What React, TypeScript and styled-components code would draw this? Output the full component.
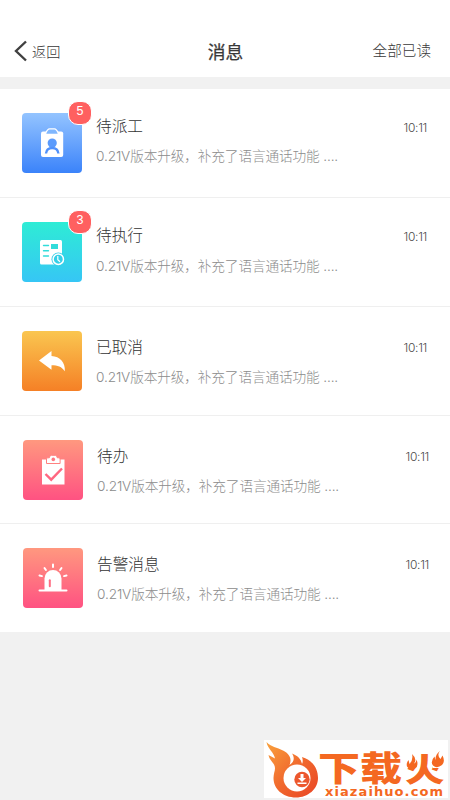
import React from "react";
import styled, { createGlobalStyle } from "styled-components";

const GlobalStyle = createGlobalStyle`
  * { box-sizing: border-box; }
  body {
    margin: 0;
    background: #f1f1f1;
    font-family: Inter, "Noto Sans CJK SC", sans-serif;
  }
`;

const Page = styled.main`
  position: relative;
  width: 450px;
  height: 800px;
  overflow: hidden;
  background: #f1f1f1;
`;

const Header = styled.header`
  display: grid;
  grid-template-columns: 1fr auto 1fr;
  align-items: center;
  height: 77px;
  padding: 25px 19px 0 14px;
  background: #fff;
  color: #383838;
`;

const BackButton = styled.button`
  display: flex;
  align-items: center;
  gap: 4px;
  padding: 0;
  border: 0;
  background: none;
  color: inherit;
  font: 300 14.2px/22px "Noto Sans CJK SC", sans-serif;
`;

const Title = styled.h1`
  margin: 0;
  padding-left: 6px;
  font: 400 17.8px/26px "Noto Sans CJK SC", sans-serif;
  -webkit-text-stroke: 0.25px #383838;
`;

const ReadAll = styled.button`
  justify-self: end;
  padding: 0 0 2px;
  border: 0;
  background: none;
  color: inherit;
  font: 300 14.6px/22px "Noto Sans CJK SC", sans-serif;
`;

const List = styled.ul`
  margin: 12px 0 0;
  padding: 0;
  list-style: none;
  background: #fff;
`;

const Row = styled.li<{ $height: number; $indent: number; $last: boolean }>`
  display: flex;
  align-items: flex-start;
  height: ${(p) => p.$height}px;
  padding: 24px ${(p) => 23 - p.$indent * 2}px 0 ${(p) => 22 + p.$indent}px;
  border-bottom: ${(p) => (p.$last ? "0" : "1px solid #efefef")};
`;

const Tile = styled.div<{ $from: string; $to: string }>`
  position: relative;
  flex: none;
  width: 60px;
  height: 60px;
  border-radius: 4px;
  background: linear-gradient(${(p) => p.$from}, ${(p) => p.$to});

  > svg { display: block; }
`;

const Badge = styled.span`
  position: absolute;
  top: -12px;
  right: -10px;
  width: 24px;
  height: 24px;
  border: 1px solid #fff;
  border-radius: 10px;
  background: #ff6060;
  color: #fff;
  font: 300 12.5px/19px "Liberation Sans", sans-serif;
  text-align: center;
`;

const Message = styled.div<{ $shift: number }>`
  flex: 1;
  margin-left: 14px;
  padding-top: ${(p) => p.$shift}px;
`;

const Name = styled.h2`
  margin: 0;
  color: #333;
  font: 300 15.7px/24px "Noto Sans CJK SC", sans-serif;
`;

const Summary = styled.p<{ $gap: number }>`
  margin: ${(p) => p.$gap}px 0 0;
  color: #8c8c8c;
  font-size: 13.7px;
  font-weight: 300;
  line-height: 20px;
  letter-spacing: -0.16px;
  white-space: nowrap;
`;

const Time = styled.time<{ $top: number }>`
  margin-top: ${(p) => p.$top}px;
  color: #4c4c4c;
  font-size: 12px;
  font-weight: 300;
  line-height: 20px;
  letter-spacing: -0.3px;
`;

const Watermark = styled.aside`
  position: absolute;
  left: 264px;
  top: 740px;
  width: 184px;
  height: 58px;
  background: #fff;

  svg { display: block; }
`;

const AssignIcon = () => (
  <svg width="60" height="60" viewBox="0 0 60 60">
    <rect x="19" y="18.5" width="22.2" height="25.5" rx="2" fill="#fff" />
    <path fill="#80b7fe" stroke="#fff" strokeWidth="1.4" strokeLinejoin="round" d="M23.5 20.5q2.2-4.6 4-4.6h5q1.8 0 4 4.6-.3 1-2 1h-9q-1.7 0-2-1z" />
    <circle cx="30.2" cy="30" r="4.6" fill="#5b9bfc" />
    <path fill="none" stroke="#5091fb" strokeWidth="2.4" d="M24 40.5q.5-5.500 6.200-5.500t6.200 5.500" />
  </svg>
);

const ExecuteIcon = () => (
  <svg width="60" height="60" viewBox="0 0 60 60">
    <rect x="18" y="18" width="22" height="24.5" rx="1.5" fill="#fff" />
    <path stroke="#31dcda" strokeWidth="1.4" strokeLinecap="round" d="M21.5 23.5h5M21.5 28.8h5M21.5 34h5" />
    <path fill="#31dcda" d="M29 22h7v5h-7z" />
    <circle cx="36.3" cy="37.2" r="6.8" fill="#34d0e8" />
    <circle cx="36.3" cy="37.2" r="5.2" fill="none" stroke="#fff" strokeWidth="1.5" />
    <path fill="none" stroke="#fff" strokeWidth="1.2" d="M35.8 34v3.700l2.200 2" />
  </svg>
);

const CancelIcon = () => (
  <svg width="60" height="60" viewBox="0 0 60 60">
    <path fill="#fff" d="M17 29.5 29.5 20v5C38 25.5 43.5 31.5 42.8 40.2c-3-4.500-7-6-13.300-6v4.600z" />
  </svg>
);

const TodoIcon = () => (
  <svg width="60" height="60" viewBox="0 0 60 60">
    <path fill="#fff" d="M19 19.5h22.5v25H19z" />
    <path fill="#fff" stroke="#ff8180" strokeWidth="1" d="M23.5 23.5V19q0-1.200 1.200-1.200h1.600q.3-2.500 2-2.500h4q1.700 0 2 2.500h1.600q1.200 0 1.200 1.200v4.500z" />
    <circle cx="30.3" cy="19.4" r="1.8" fill="#ff7781" />
    <path fill="none" stroke="#ff6781" strokeWidth="2.4" d="m22.5 34 5.700 5.700L39 28.500" />
  </svg>
);

const AlarmIcon = () => (
  <svg width="60" height="60" viewBox="0 0 60 60">
    <path fill="#fff" d="M21.5 42V30.5a8.500 8.500 0 0 1 17 0V42z" />
    <path fill="none" stroke="#fff" strokeWidth="2" strokeLinecap="round" d="M16.5 42.5h27M30 16.5v2.500M21.5 20l1.400 2M38.5 20l-1.400 2M16.5 27.5l2.500.6M43.5 27.5l-2.500.6" />
    <path stroke="#ff6c82" strokeWidth="2" strokeLinecap="round" d="M26.8 32.2v6" />
  </svg>
);

const items = [
  { name: "待派工", count: 5, icon: <AssignIcon />, from: "#94c4ff", to: "#3b83fa", height: 109, indent: 0, shift: 1, gap: 8, timeTop: 5 },
  { name: "待执行", count: 3, icon: <ExecuteIcon />, from: "#2eecd5", to: "#36c6f5", height: 109, indent: 0, shift: 1, gap: 9, timeTop: 5 },
  { name: "已取消", icon: <CancelIcon />, from: "#fac650", to: "#f58026", height: 109, indent: 0, shift: 4, gap: 8, timeTop: 7 },
  { name: "待办", icon: <TodoIcon />, from: "#ff987f", to: "#ff5282", height: 108, indent: 1, shift: 4, gap: 8, timeTop: 7 },
  { name: "告警消息", icon: <AlarmIcon />, from: "#ff987f", to: "#ff5282", height: 108, indent: 1, shift: 4, gap: 8, timeTop: 7 },
];

const SiteLogo = () => (
  <svg width="184" height="58" viewBox="0 0 184 58">
    <defs>
      <linearGradient id="flame" x1="0" y1="0" x2="1" y2="1">
        <stop offset="0" stopColor="#f9a13c" />
        <stop offset="0.5" stopColor="#f16b2e" />
        <stop offset="1" stopColor="#e94425" />
      </linearGradient>
    </defs>
    <path
      fill="url(#flame)"
      d="M2.5 2C7 7 13 7.5 19 10.5C26 14 28 19 25.5 25C30 22 31 18 28 13.5C34 16 37 19 38 24C39 22 39 20 38 17C48 20 54 28 54 38C54 49 44 57.5 32 57.5C19 57.5 9.5 49 9.5 38C9.5 32 12.5 29 10 24.5C8 21 5.5 20 4.5 15L11 18.5C10 12 3.500 9 2.500 2Z"
    />
    <circle cx="33" cy="38" r="13.5" fill="#fff" />
    <circle cx="38" cy="39.5" r="7.7" fill="#ec572d" />
    <path fill="#fff" d="M36.5 34h3v4h2.500l-4 4-4-4h2.500zM33.5 42.5h9V44h-9z" />
    <g fill="#f46821" fontFamily="'Noto Sans CJK SC', sans-serif" fontWeight="900" transform="translate(0 40.5) scale(1 .82)">
      <text x="54" y="0" fontSize="42">下载</text>
      <text x="141" y="0" fontSize="39.5">火</text>
    </g>
    <path fill="#fff" d="M142 11h11.500v17h-11.500zM169 10h13v18h-13z" />
    <path
      fill="#f46821"
      d="M148 14q5.500 5 2 9.500 2-.5 2.500-4 2.500 7-1.500 9-6 2-8-2-1-3.500 1.500-6.500l1 4q4-4 2.500-10zM176 11q-3.500 4 .5 8l2-3.500q3 6-.5 9.500-5 4-9 .5-3-4 1.500-9l1 4q-.5-6 4.500-9.500z"
    />
    <text x="61" y="55.8" fill="#f46821" fontFamily="'DejaVu Sans', sans-serif" fontSize="13" fontWeight="700" textLength="118" lengthAdjust="spacing">xiazaihuo.com</text>
  </svg>
);

export default function App() {
  return (
    <>
      <GlobalStyle />
      <Page>
        <Header>
          <BackButton>
            <svg width="14" height="22" viewBox="0 0 14 22">
              <path d="M12 1.5 2 11l10 9.5" fill="none" stroke="#404040" strokeWidth="2.4" />
            </svg>
            返回
          </BackButton>
          <Title>消息</Title>
          <ReadAll>全部已读</ReadAll>
        </Header>
        <List>
          {items.map((item, i) => (
            <Row key={item.name} $height={item.height} $indent={item.indent} $last={i === items.length - 1}>
              <Tile $from={item.from} $to={item.to}>
                {item.icon}
                {item.count && <Badge>{item.count}</Badge>}
              </Tile>
              <Message $shift={item.shift}>
                <Name>{item.name}</Name>
                <Summary $gap={item.gap}>0.21V版本升级，补充了语言通话功能 ....</Summary>
              </Message>
              <Time $top={item.timeTop}>10:11</Time>
            </Row>
          ))}
        </List>
        <Watermark>
          <SiteLogo />
        </Watermark>
      </Page>
    </>
  );
}
